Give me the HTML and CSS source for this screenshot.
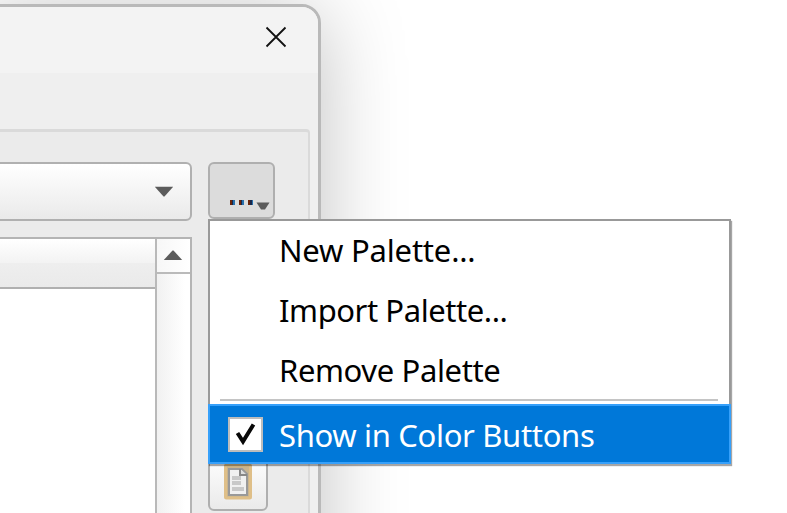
FILE: index.html
```html
<!DOCTYPE html>
<html lang="en">
<head>
<meta charset="utf-8">
<title>Color palettes</title>
<link rel="stylesheet" href="styles.css">
</head>
<body>
<main class="window">
  <header class="titlebar">
    <svg class="close" viewBox="0 0 22 22"><path d="M1.5 1.5 20.5 20.5M20.5 1.5 1.5 20.5"/></svg>
  </header>
  <section class="group">
    <div class="combo"><svg class="arrow" viewBox="0 0 20 11"><path d="M0.8 0.8H19.2L10.5 10.5H9.5Z"/></svg></div>
    <div class="more">
      <span class="dots"><i></i><i></i><i></i></span>
      <svg class="more-arrow" viewBox="0 0 14 8"><path d="M0.5 0.5H13.5L9 7.5H5Z"/></svg>
    </div>
    <div class="table">
      <div class="content"><div class="table-head"></div></div>
      <div class="scroll"><div class="scroll-up"><svg class="arrow" viewBox="0 0 20 11"><path d="M9.5 0.5H10.5L19.2 10H0.8Z"/></svg></div></div>
    </div>
    <div class="side">
      <div class="paste">
        <svg class="clipboard" viewBox="0 0 30 38">
          <rect class="board" x="2.5" y="2" width="25" height="33" rx="1"/>
          <path class="sheet" d="M6 6H19L24 11V32H6Z"/>
          <path class="fold" d="M17 6V12H24"/>
          <path class="lines" d="M9 15H18M9 20H18M9 26H21"/>
        </svg>
      </div>
    </div>
  </section>
</main>
<nav class="menu">
  <div class="item new">New Palette...</div>
  <div class="item import">Import Palette...</div>
  <div class="item remove">Remove Palette</div>
  <hr class="separator">
  <div class="item selected">
    <span class="check"><svg viewBox="0 0 24 26"><path d="M3.5 12 9 20.5 19.5 3.5"/></svg></span>
    <span class="label">Show in Color Buttons</span>
  </div>
</nav>
</body>
</html>
```
FILE: styles.css
```css
* { box-sizing: border-box; }
html { height: 513px; overflow: hidden; }
body {
  margin: 0;
  width: 787px;
  height: 513px;
  overflow: hidden;
  position: relative;
  background: #fff;
  padding-top: 4px;
  font-family: "Noto Sans", "DejaVu Sans", sans-serif;
}
.window {
  width: 341px;
  height: 600px;
  margin-left: -20px;
  border: 3px solid #b9b9b9;
  border-radius: 19px;
  background: #efefef;
  box-shadow: 0 8px 84px rgba(0, 0, 0, .25);
  overflow: hidden;
}
.titlebar {
  height: 66px;
  background: #f3f3f3;
  display: flex;
  justify-content: flex-end;
  padding: 19px 31px 0 0;
}
.close { width: 22px; height: 22px; fill: none; stroke: #111; stroke-width: 1.8; }
.group {
  width: 328px;
  height: 500px;
  margin-left: -1px;
  margin-top: 56px;
  border: 2px solid #dadada;
  border-width: 3px 2px;
  border-radius: 4px;
  background: #ebebeb;
  padding: 30px 0 0 8px;
  display: grid;
  grid-template-columns: 200px 67px;
  grid-template-rows: 59px 400px;
  column-gap: 16px;
  row-gap: 16px;
}
.combo {
  border: 2px solid #b0b0b0;
  border-radius: 6px;
  background: linear-gradient(#fff, #eaeaea);
  display: flex;
  align-items: center;
  justify-content: flex-end;
  padding-right: 16px;
}
.arrow { width: 20px; height: 11px; fill: #5b5b5b; }
.more {
  height: 57px;
  border: 2px solid #afafaf;
  border-radius: 6px;
  background: #dcdcdc;
  display: flex;
  align-items: flex-end;
  padding: 0 3px 7px 20px;
}
.dots { display: flex; gap: 4px; padding-bottom: 5px; }
.dots i { width: 5px; height: 5px; background: linear-gradient(90deg, #6b2408 0 35%, #18264a 35% 70%, #2670ac 70%); }
.more-arrow { width: 14px; height: 8px; fill: #5b5b5b; margin-left: auto; }
.table {
  border: 2px solid #b4b4b4;
  background: #fff;
  display: grid;
  grid-template-columns: 1fr 35px;
}
.table-head {
  height: 50px;
  border-bottom: 2px solid #b0b0b0;
  background: linear-gradient(#fff 0%, #f3f3f3 49%, #eee 51%, #eaeaea);
}
.scroll { border-left: 2px solid #b9b9b9; background: linear-gradient(90deg, #f1f1f1, #fff 85%); }
.scroll-up {
  height: 35px;
  border-bottom: 2px solid #bababa;
  background: linear-gradient(90deg, #f7f7f7, #fff);
  display: flex;
  align-items: center;
  justify-content: center;
  padding-right: 2px;
}
.side { display: flex; flex-direction: column; padding-top: 215px; }
.paste {
  width: 60px;
  height: 59px;
  border: 2px solid #afafaf;
  border-radius: 6px;
  background: linear-gradient(#fff, #eaeaea);
  display: flex;
  align-items: center;
  justify-content: center;
}
.clipboard { width: 30px; height: 38px; }
.board { fill: #c9b48e; stroke: #dfbf88; stroke-width: 3; }
.sheet { fill: #f0f0f0; stroke: #999; stroke-width: 2; }
.fold { fill: #ddd; stroke: #888; stroke-width: 2; }
.lines { stroke: #c8c8c8; stroke-width: 4; fill: none; }
.menu {
  position: absolute;
  left: 208px;
  top: 219px;
  width: 523px;
  height: 245px;
  border: 2px solid #999;
  background: #fff;
  box-shadow: 1px 2px 1px rgba(0, 0, 0, .35);
  font-size: 31px;
  line-height: 58px;
  color: #000;
}
.item { height: 60px; padding-left: 69px; white-space: nowrap; }
.new { letter-spacing: -.2px; }
.import { letter-spacing: -.43px; }
.remove { letter-spacing: -.38px; }
.separator { margin: -2px 11px 3px 10px; border: 0; height: 2px; background: #c4c4c4; }
.selected {
  margin: 0 -2px;
  border: 2px solid #36a0fa;
  background: #0078d9;
  color: #fff;
  display: flex;
  align-items: center;
  padding-left: 18px;
  letter-spacing: -.33px;
}
.label { padding-top: 2px; }
.check {
  width: 35px;
  height: 35px;
  border: 2px solid #bdbdbd;
  background: #fff;
  display: flex;
  align-items: center;
  justify-content: center;
  margin-right: 16px;
}
.check svg { width: 24px; height: 26px; fill: none; stroke: #080808; stroke-width: 4; }
```
